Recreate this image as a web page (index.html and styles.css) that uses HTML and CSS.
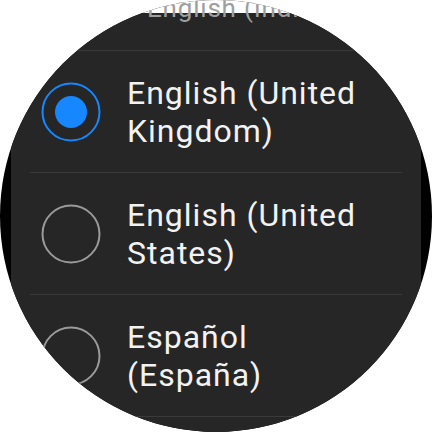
FILE: index.html
```html
<!DOCTYPE html>
<html lang="en">
<head>
  <meta charset="UTF-8" />
  <meta name="viewport" content="width=device-width, initial-scale=1.0"/>
  <title>Language</title>
  <link rel="stylesheet" href="styles.css">
</head>
<body>

  <div class="watch">
    <div class="list">

      <!-- 上端で縮小されている項目 -->
      <div class="item-top">
        <span class="label-top">English (India)</span>
      </div>

      <div class="item">
        <svg class="radio" viewBox="0 0 60 60">
          <circle cx="30" cy="30" r="28.5" fill="none" stroke="#1787ff" stroke-width="2"/>
          <circle cx="30" cy="30" r="16" fill="#1787ff"/>
        </svg>
        <span class="label">English (United Kingdom)</span>
      </div>

      <div class="item">
        <svg class="radio" viewBox="0 0 60 60">
          <circle cx="30" cy="30" r="28.5" fill="none" stroke="#9a9a9a" stroke-width="2"/>
        </svg>
        <span class="label">English (United States)</span>
      </div>

      <div class="item">
        <svg class="radio" viewBox="0 0 60 60">
          <circle cx="30" cy="30" r="28.5" fill="none" stroke="#9a9a9a" stroke-width="2"/>
        </svg>
        <span class="label">Español (España)</span>
      </div>

      <!-- 次の項目（画面外） -->
      <div class="item"></div>

    </div>
  </div>

</body>
</html>
```

FILE: styles.css
```css
body {
  margin: 0;
  background-color: #ffffff;
  font-family: Roboto, "Noto Sans", sans-serif;
}

.watch {
  width: 432px;
  height: 432px;
  border-radius: 50%;
  overflow: hidden;
  background-color: #000;
}

.list {
  margin: 0 11px;
  height: 100%;
  background: linear-gradient(to bottom, #ffffff 13px, #262626 13px);
}

.item-top {
  height: 50px;
  overflow: hidden;
}

.label-top {
  display: block;
  margin-top: -5px;
  padding-left: 136px;
  font-size: 26px;
  line-height: 26px;
  letter-spacing: 0.8px;
  color: #9e9e9e;
  white-space: nowrap;
}

.item {
  display: flex;
  align-items: center;
  height: 121px;
  margin: 0 19px;
  border-top: 1px solid #3a3a3a;
}

.radio {
  flex: none;
  width: 60px;
  height: 60px;
  margin-left: 11px;
  margin-right: 26px;
}

.label {
  width: 236px;
  font-size: 32px;
  line-height: 38px;
  letter-spacing: 1px;
  color: #f2f2f2;
}
```
